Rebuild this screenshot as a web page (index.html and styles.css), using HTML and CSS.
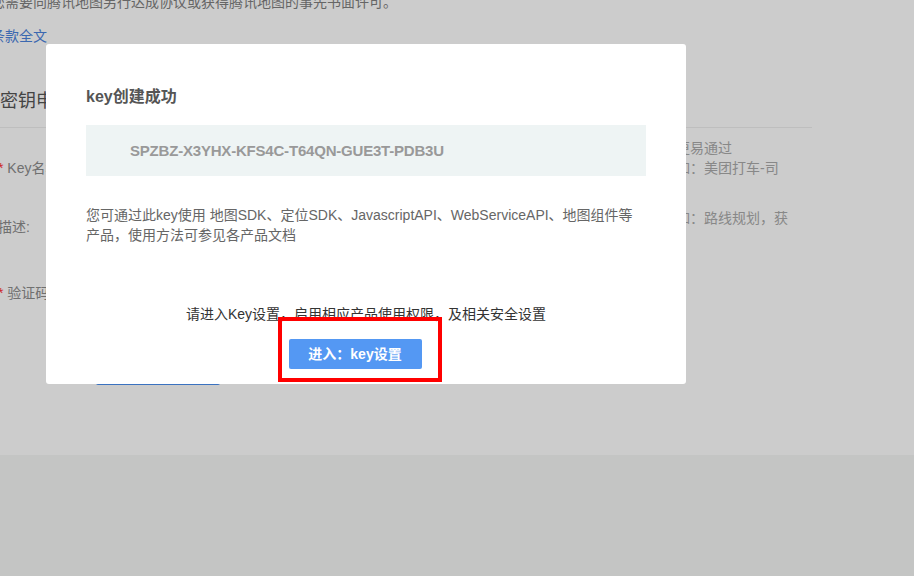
FILE: index.html
```html
<!DOCTYPE html>
<html lang="zh-CN">
<head>
    <meta charset="UTF-8">
    <meta name="viewport" content="width=device-width, initial-scale=1.0">
    <title>key创建成功</title>
    <link rel="stylesheet" href="styles.css">
</head>
<body>
    <div class="page">
        <div class="content">
            <p class="notice">您需要向腾讯地图另行达成协议或获得腾讯地图的事先书面许可。</p>
            <a class="terms" href="#">条款全文</a>
            <h2 class="section-title">密钥申请</h2>

            <div class="form">
                <div class="row row-name">
                    <div class="label"><span class="req">*</span> Key名称</div>
                    <div class="field"><div class="input"></div></div>
                    <div class="hint">
                        <span>名称清晰规范，审核更易通过</span>
                        <span>建议按应用名称，例如：美团打车-司机端</span>
                    </div>
                </div>
                <div class="row row-desc">
                    <div class="label">描述:</div>
                    <div class="field"><div class="input textarea"></div></div>
                    <div class="hint">
                        <span>请填写应用用途，例如：路线规划，获取位置信息</span>
                    </div>
                </div>
                <div class="row row-code">
                    <div class="label"><span class="req">*</span> 验证码</div>
                    <div class="field"><div class="input short"></div></div>
                    <div class="hint"></div>
                </div>
                <div class="row row-submit">
                    <div class="label"></div>
                    <div class="field"><div class="submit">提交</div></div>
                </div>
            </div>
        </div>
    </div>

    <div class="mask"></div>

    <div class="dialog">
        <h3 class="dialog-title">key创建成功</h3>
        <div class="key-box">SPZBZ-X3YHX-KFS4C-T64QN-GUE3T-PDB3U</div>
        <p class="dialog-desc">您可通过此key使用 地图SDK、定位SDK、JavascriptAPI、WebServiceAPI、地图组件等产品，使用方法可参见各产品文档</p>
        <div class="dialog-foot">
            <p class="foot-tip">请进入Key设置，启用相应产品使用权限，及相关安全设置</p>
            <div class="btn-primary">进入：key设置</div>
            <div class="mark"></div>
        </div>
    </div>
</body>
</html>
```

FILE: styles.css
```css
body {
    margin: 0;
    background-color: #f6f7f6;
    font-family: "Liberation Sans", "Noto Sans CJK SC", sans-serif;
    font-size: 14px;
    color: #666;
}

.page {
    height: 455px;
    background-color: #fff;
    overflow: hidden;
}

.content {
    width: 821px;
    margin-left: -9px;
    margin-top: -8px;
}

.notice {
    margin: 0;
    line-height: 20px;
    color: #808080;
}

.terms {
    display: block;
    margin-top: 14px;
    line-height: 20px;
    color: #4a82dc;
    text-decoration: none;
}

.section-title {
    margin: 42px 0 0;
    padding: 0 0 13px 9px;
    font-size: 18px;
    font-weight: normal;
    line-height: 26px;
    color: #555;
    border-bottom: 1px solid #eee;
}

.form {
    padding: 10px 0 0 7px;
}

.row {
    display: grid;
    grid-template-columns: 98px 454px 240px;
}

.row-name { height: 70px; }
.row-desc { height: 66px; }
.row-code { height: 81px; }

.label {
    line-height: 20px;
    color: #8c8c8c;
    padding-top: 9px;
}

.row-name .label {
    padding-top: 20px;
}

.req {
    color: #f33;
}

.input {
    height: 38px;
    margin-top: 10px;
    width: 420px;
    border: 1px solid #ddd;
    border-radius: 2px;
}

.input.textarea {
    margin-top: 0;
    height: 56px;
}

.input.short {
    margin-top: 0;
    width: 200px;
}

.hint {
    line-height: 20px;
    color: #aaa;
}

.hint span {
    display: block;
}

.submit {
    width: 124px;
    height: 30px;
    line-height: 30px;
    text-align: center;
    color: #fff;
    background-color: #4a8ff0;
    border-radius: 2px;
}

.mask {
    position: fixed;
    inset: 0;
    background-color: rgba(0, 0, 0, 0.2);
}

.dialog {
    position: fixed;
    left: 46px;
    top: 44px;
    width: 560px;
    padding: 41px 40px 15px;
    background-color: #fff;
    border-radius: 3px;
}

.dialog-title {
    margin: 0;
    font-size: 16px;
    line-height: 24px;
    color: #555;
}

.key-box {
    margin-top: 16px;
    height: 51px;
    line-height: 51px;
    padding-left: 44px;
    background-color: #eef4f4;
    color: #999;
    font-size: 15px;
    font-weight: bold;
    letter-spacing: -0.2px;
}

.dialog-desc {
    margin: 29px 0 0;
    line-height: 20px;
    color: #666;
}

.dialog-foot {
    position: relative;
    margin-top: 59px;
    text-align: center;
}

.foot-tip {
    margin: 0;
    line-height: 20px;
    color: #333;
}

.btn-primary {
    display: inline-block;
    margin-top: 15px;
    margin-right: 22px;
    width: 133px;
    height: 30px;
    line-height: 30px;
    color: #fff;
    font-weight: bold;
    background-color: #5498f3;
    border-radius: 2px;
}

.mark {
    position: absolute;
    left: 192px;
    top: 13px;
    width: 164px;
    height: 65px;
    box-sizing: border-box;
    border: 4px solid #f00;
}
```
